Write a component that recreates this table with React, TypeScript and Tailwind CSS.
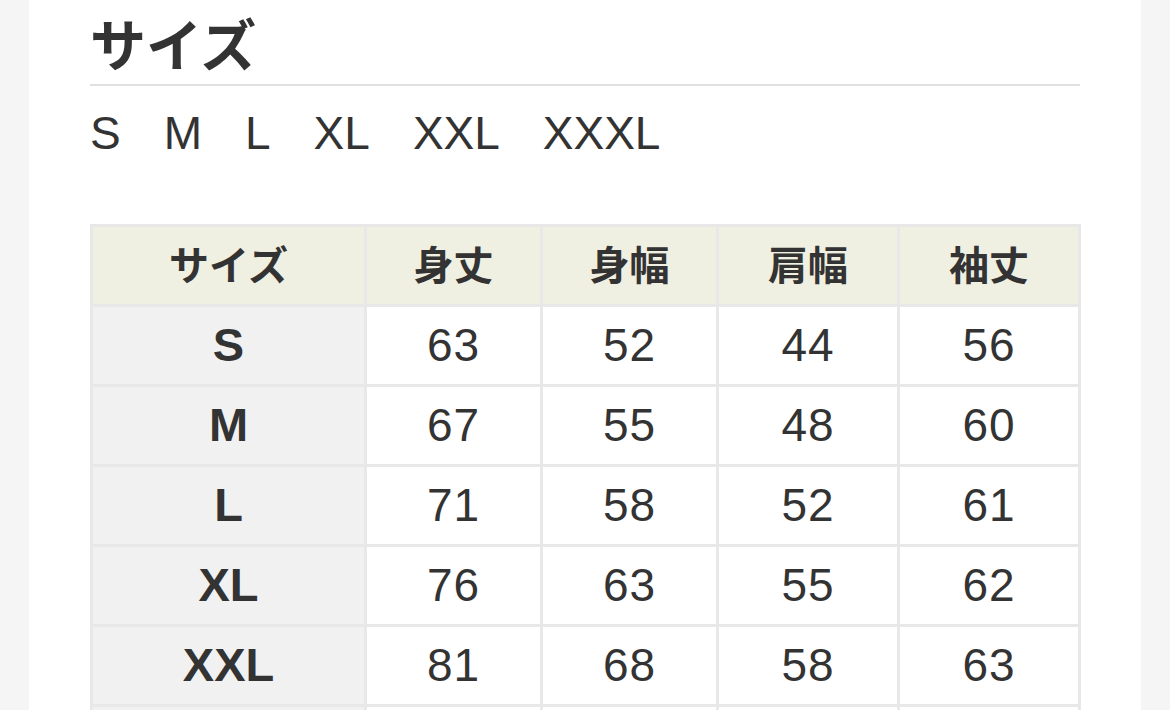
const sizes = ["S", "M", "L", "XL", "XXL", "XXXL"]

const headers = ["サイズ", "身丈", "身幅", "肩幅", "袖丈"]

const rows: [string, number, number, number, number][] = [
  ["S", 63, 52, 44, 56],
  ["M", 67, 55, 48, 60],
  ["L", 71, 58, 52, 61],
  ["XL", 76, 63, 55, 62],
  ["XXL", 81, 68, 58, 63],
  ["XXXL", 86, 73, 61, 64],
]

const latin = "font-['Liberation_Sans','Noto_Sans_CJK_JP',sans-serif]"
const jp = "font-['Noto_Sans_CJK_JP',sans-serif]"

export default function App() {
  return (
    <div className="min-h-screen overflow-hidden bg-[#f5f5f5]">
      <div className="mx-auto h-[710px] w-[1112px] overflow-hidden bg-white px-[61px] pt-[8px] text-[#333333]">
        <h2 className={`${jp} text-[56px] font-bold leading-[68px]`}>サイズ</h2>
        <div className="mt-[8px] h-[2px] w-full bg-[#e0e0e0]" />

        <div className={`${latin} mt-[21px] flex gap-[43px] text-[46px] leading-[52px]`}>
          {sizes.map((s) => (
            <span key={s}>{s}</span>
          ))}
        </div>

        <table className="mt-[65px] w-[988px] table-fixed border-collapse">
          <colgroup>
            <col className="w-[274px]" />
            <col className="w-[176px]" />
            <col className="w-[176px]" />
            <col className="w-[181px]" />
            <col className="w-[181px]" />
          </colgroup>
          <thead>
            <tr>
              {headers.map((h) => (
                <th
                  key={h}
                  className={`${jp} h-[80px] border-[3px] border-[#e8e8e8] bg-[#efefe2] p-0 pb-[6px] text-center text-[40px] font-bold`}
                >
                  {h}
                </th>
              ))}
            </tr>
          </thead>
          <tbody>
            {rows.map((r) => (
              <tr key={r[0]}>
                <th
                  className={`${latin} h-[80px] border-[3px] border-[#e8e8e8] bg-[#f1f1f1] p-0 text-center text-[47px] font-bold`}
                >
                  {r[0]}
                </th>
                {r.slice(1).map((v, i) => (
                  <td
                    key={i}
                    className={`${latin} h-[80px] border-[3px] border-[#e8e8e8] p-0 text-center text-[46px] tracking-[1px]`}
                  >
                    {v}
                  </td>
                ))}
              </tr>
            ))}
          </tbody>
        </table>
      </div>
    </div>
  )
}
